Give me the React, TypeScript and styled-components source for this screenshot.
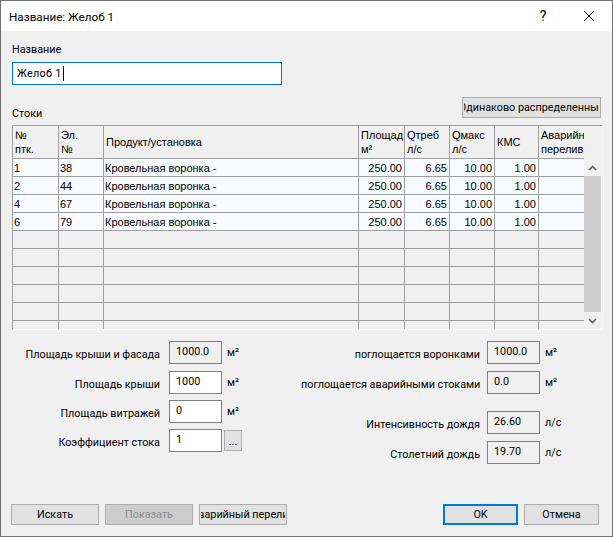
import React from 'react';
import styled, { createGlobalStyle } from 'styled-components';

const GlobalStyle = createGlobalStyle`
  html, body {
    margin: 0;
    padding: 0;
    background: #f0f0f0;
  }
  * {
    box-sizing: border-box;
  }
`;

const Dialog = styled.div`
  width: 613px;
  height: 537px;
  display: flex;
  flex-direction: column;
  background: #f0f0f0;
  border: 1px solid #707070;
  font-family: Roboto, "Liberation Sans", sans-serif;
  font-size: 10.8px;
  color: #000;
  overflow: hidden;
`;

const TitleBar = styled.div`
  height: 30px;
  flex: none;
  display: flex;
  align-items: center;
  background: #fff;
  padding-left: 8px;
`;

const TitleText = styled.div`
  flex: 1;
  font-size: 11.7px;
  padding-top: 1px;
`;

const TitleButton = styled.div`
  width: 46px;
  height: 30px;
  display: flex;
  align-items: center;
  justify-content: center;
  font-size: 14px;
`;

const Content = styled.div`
  flex: 1;
  display: flex;
  flex-direction: column;
  padding: 0 10px 11px;
`;

const FieldLabel = styled.div`
  height: 16px;
  line-height: 16px;
  margin-top: 11px;
  margin-left: 1px;
`;

const NameInput = styled.div`
  width: 270px;
  height: 23px;
  margin-top: 4px;
  margin-left: 1px;
  padding-left: 4px;
  display: flex;
  align-items: center;
  background: #fff;
  border: 1px solid #0078d7;
  letter-spacing: 0.3px;
  white-space: pre;
`;

const Caret = styled.span`
  width: 1px;
  height: 15px;
  background: #000;
  margin-left: 1px;
`;

const DrainsHeader = styled.div`
  display: flex;
  justify-content: space-between;
  align-items: flex-end;
  margin-top: 12px;
  margin-right: 1px;
  height: 21px;
`;

const DrainsLabel = styled.div`
  line-height: 16px;
  margin-bottom: -4px;
  margin-left: 1px;
`;

const Button = styled.div<{ $width: number; $primary?: boolean; $disabled?: boolean }>`
  width: ${(p) => p.$width}px;
  height: 21px;
  flex: none;
  display: flex;
  align-items: center;
  justify-content: center;
  overflow: hidden;
  white-space: nowrap;
  background: ${(p) => (p.$disabled ? '#cccccc' : '#e1e1e1')};
  color: ${(p) => (p.$disabled ? '#8a8a8a' : '#000')};
  border: ${(p) => (p.$primary ? '2px solid #0078d7' : '1px solid #adadad')};
`;

const ClippedLabel = styled.span`
  flex: none;
`;

const ClipFrame = styled.div`
  width: 100%;
  margin: 0 1px;
  display: flex;
  justify-content: center;
  overflow: hidden;
`;

const GridFrame = styled.div`
  display: flex;
  height: 205px;
  width: 590px;
  margin-top: 7px;
  margin-left: 1px;
  border-top: 1px solid #a0a0a0;
  border-left: 1px solid #a0a0a0;
  border-bottom: 1px solid #fff;
  overflow: hidden;
`;

const GridBody = styled.div`
  width: 571px;
  flex: none;
  overflow: hidden;
`;

const GridRow = styled.div<{ $height: number }>`
  display: grid;
  grid-template-columns: 46px 45px 255px 46px 45px 45px 44px 46px;
  height: ${(p) => p.$height}px;
`;

const Cell = styled.div<{ $kind: 'head' | 'data' | 'empty'; $right?: boolean }>`
  display: flex;
  align-items: center;
  justify-content: ${(p) => (p.$right ? 'flex-end' : 'flex-start')};
  padding: 0 2px 0 ${(p) => (p.$kind === 'head' ? 2 : 1)}px;
  background: ${(p) => (p.$kind === 'data' ? '#f7fbff' : '#f0f0f0')};
  border-right: 1px solid #a0a0a0;
  border-bottom: 1px solid #a0a0a0;
  font-family: "Liberation Sans", sans-serif;
  font-size: 11px;
  line-height: 14px;
  white-space: pre;
  overflow: hidden;
`;

const ScrollBar = styled.div`
  width: 18px;
  flex: none;
  display: flex;
  flex-direction: column;
  background: #f0f0f0;
  border-right: 1px solid #fff;
`;

const ScrollHead = styled.div`
  height: 33px;
  flex: none;
`;

const ScrollArrow = styled.div`
  height: 17px;
  flex: none;
  display: flex;
  align-items: center;
  justify-content: center;
`;

const ScrollThumb = styled.div`
  flex: 1;
  background: #cdcdcd;
`;

const Summary = styled.div`
  display: flex;
  margin-top: 11px;
`;

const SummaryColumn = styled.div<{ $labelWidth: number; $width: number }>`
  width: ${(p) => p.$width}px;
  flex: none;
  display: grid;
  grid-template-columns: ${(p) => p.$labelWidth}px auto;
  align-content: start;
`;

const SummaryRow = styled.div<{ $gap: number }>`
  grid-column: 1 / -1;
  display: grid;
  grid-template-columns: subgrid;
  height: 23px;
  margin-bottom: ${(p) => p.$gap}px;
  align-items: center;
`;

const SummaryLabel = styled.div`
  text-align: right;
  white-space: nowrap;
  padding-top: 3px;
`;

const FieldGroup = styled.div<{ $inset: number }>`
  display: flex;
  align-items: center;
  padding-left: ${(p) => p.$inset}px;
`;

const ValueBox = styled.div<{ $readOnly?: boolean }>`
  width: 53px;
  height: 23px;
  padding: 0 6px 3px;
  display: flex;
  align-items: center;
  background: ${(p) => (p.$readOnly ? '#f0f0f0' : '#fff')};
  border: 1px solid #808080;
`;

const Unit = styled.div`
  margin-left: 5px;
  white-space: nowrap;
`;

const MoreButton = styled.div`
  width: 18px;
  height: 21px;
  margin-left: 2px;
  display: flex;
  align-items: flex-end;
  justify-content: center;
  padding-bottom: 2px;
  background: #e1e1e1;
  border: 1px solid #adadad;
  line-height: 12px;
`;

const Footer = styled.div`
  display: flex;
  height: 21px;
  margin-top: auto;
`;

const FooterGroup = styled.div`
  display: flex;
  gap: 6px;
`;

const FooterRight = styled(FooterGroup)`
  margin-left: auto;
  margin-right: 3px;
`;

const Chevron = ({ up }: { up?: boolean }) => (
  <svg width="9" height="6" viewBox="0 0 9 6">
    <path
      d={up ? 'M1 5 L4.5 1.5 L8 5' : 'M1 1 L4.5 4.5 L8 1'}
      fill="none"
      stroke="#606060"
      strokeWidth="1.6"
    />
  </svg>
);

const headers = [
  '№\nптк.',
  'Эл.\n№',
  'Продукт/установка',
  'Площад\nм²',
  'Qтреб\nл/с',
  'Qмакс\nл/с',
  'КМС',
  'Аварийн\nперелив',
];

const rows = [
  ['1', '38'],
  ['2', '44'],
  ['4', '67'],
  ['6', '79'],
];

const leftFields = [
  { label: 'Площадь крыши и фасада', value: '1000.0', readOnly: true, gap: 7 },
  { label: 'Площадь крыши', value: '1000', gap: 6 },
  { label: 'Площадь витражей', value: '0', gap: 6 },
];

const rightFields = [
  { label: 'поглощается воронками', value: '1000.0', unit: 'м²', gap: 7 },
  { label: 'поглощается аварийными стоками', value: '0.0', unit: 'м²', gap: 17 },
  { label: 'Интенсивность дождя', value: '26.60', unit: 'л/с', gap: 7 },
  { label: 'Столетний дождь', value: '19.70', unit: 'л/с', gap: 0 },
];

const App: React.FC = () => {
  return (
    <>
      <GlobalStyle />
      <Dialog>
        <TitleBar>
          <TitleText>Название: Желоб 1</TitleText>
          <TitleButton>?</TitleButton>
          <TitleButton>
            <svg width="12" height="12" viewBox="0 0 12 12">
              <path d="M1 1 L11 11 M11 1 L1 11" stroke="#000" strokeWidth="1" />
            </svg>
          </TitleButton>
        </TitleBar>
        <Content>
          <FieldLabel>Название</FieldLabel>
          <NameInput>
            Желоб 1<Caret />
          </NameInput>
          <DrainsHeader>
            <DrainsLabel>Стоки</DrainsLabel>
            <Button $width={139}>
              <ClipFrame>
                <ClippedLabel>Одинаково распределенные</ClippedLabel>
              </ClipFrame>
            </Button>
          </DrainsHeader>
          <GridFrame>
            <GridBody>
              <GridRow $height={33}>
                {headers.map((h) => (
                  <Cell key={h} $kind="head">
                    {h}
                  </Cell>
                ))}
              </GridRow>
              {rows.map(([a, b]) => (
                <GridRow key={a} $height={18}>
                  <Cell $kind="data">{a}</Cell>
                  <Cell $kind="data">{b}</Cell>
                  <Cell $kind="data">Кровельная воронка -</Cell>
                  <Cell $kind="data" $right>250.00</Cell>
                  <Cell $kind="data" $right>6.65</Cell>
                  <Cell $kind="data" $right>10.00</Cell>
                  <Cell $kind="data" $right>1.00</Cell>
                  <Cell $kind="data" />
                </GridRow>
              ))}
              {[0, 1, 2, 3, 4, 5].map((i) => (
                <GridRow key={i} $height={18}>
                  {headers.map((h) => (
                    <Cell key={h} $kind="empty" />
                  ))}
                </GridRow>
              ))}
            </GridBody>
            <ScrollBar>
              <ScrollHead />
              <ScrollArrow>
                <Chevron up />
              </ScrollArrow>
              <ScrollThumb />
              <ScrollArrow>
                <Chevron />
              </ScrollArrow>
            </ScrollBar>
          </GridFrame>
          <Summary>
            <SummaryColumn $width={290} $labelWidth={149}>
              {leftFields.map((f) => (
                <SummaryRow key={f.label} $gap={f.gap}>
                  <SummaryLabel>{f.label}</SummaryLabel>
                  <FieldGroup $inset={9}>
                    <ValueBox $readOnly={f.readOnly}>{f.value}</ValueBox>
                    <Unit>м²</Unit>
                  </FieldGroup>
                </SummaryRow>
              ))}
              <SummaryRow $gap={0}>
                <SummaryLabel>Коэффициент стока</SummaryLabel>
                <FieldGroup $inset={9}>
                  <ValueBox>1</ValueBox>
                  <MoreButton>...</MoreButton>
                </FieldGroup>
              </SummaryRow>
            </SummaryColumn>
            <SummaryColumn $width={300} $labelWidth={179}>
              {rightFields.map((f) => (
                <SummaryRow key={f.label} $gap={f.gap}>
                  <SummaryLabel>{f.label}</SummaryLabel>
                  <FieldGroup $inset={7}>
                    <ValueBox $readOnly>{f.value}</ValueBox>
                    <Unit>{f.unit}</Unit>
                  </FieldGroup>
                </SummaryRow>
              ))}
            </SummaryColumn>
          </Summary>
          <Footer>
            <FooterGroup>
              <Button $width={88}>Искать</Button>
              <Button $width={88} $disabled>Показать</Button>
              <Button $width={88}>
                <ClipFrame>
                  <ClippedLabel>Аварийный перелив</ClippedLabel>
                </ClipFrame>
              </Button>
            </FooterGroup>
            <FooterRight>
              <Button $width={75} $primary>OK</Button>
              <Button $width={75}>Отмена</Button>
            </FooterRight>
          </Footer>
        </Content>
      </Dialog>
    </>
  );
};

export default App;
